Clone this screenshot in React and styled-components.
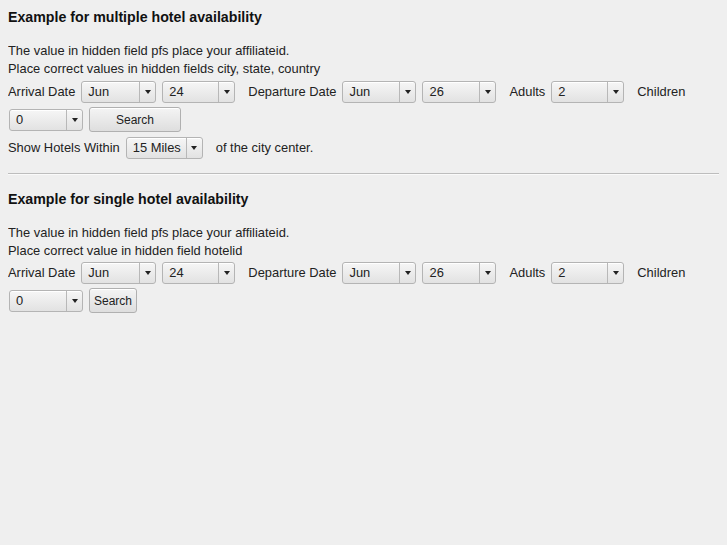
import styled, { createGlobalStyle } from "styled-components"

const GlobalStyle = createGlobalStyle`
body {
    margin: 8px;
    background: #efefef;
    font-family: "Liberation Sans", Arial, sans-serif;
    font-size: 12.9px;
    color: #222;
}
`

const Section = styled.div`
display: flex;
flex-direction: column;
`

const Title = styled.div`
font-weight: bold;
font-size: 14.2px;
line-height: 18px;
color: #111;
margin-bottom: ${(p) => p.gap}px;
`

const Line = styled.div`
line-height: 18px;
`

const Row = styled.div`
display: flex;
flex-wrap: wrap;
align-items: center;
row-gap: 4px;
margin-top: ${(p) => p.top || 0}px;
`

const Label = styled.span`
margin-left: ${(p) => (p.first ? 0 : 8)}px;
margin-right: 5px;
line-height: 22px;
white-space: nowrap;
`

const Select = styled.div`
display: flex;
width: ${(p) => p.width}px;
height: 22px;
margin: 0 5px 0 1px;
box-sizing: border-box;
border: 1px solid #b4b4b4;
border-radius: 3px;
background: linear-gradient(#f6f6f6, #e2e2e2);
box-shadow: inset 0 1px 0 #fff;
.value {
    flex: 1;
    padding-left: 6px;
    line-height: 20px;
}
.arrow {
    width: 15px;
    border-left: 1px solid #b8b8b8;
    display: flex;
    align-items: center;
    justify-content: center;
}
.arrow::after {
    content: "";
    border-left: 3px solid transparent;
    border-right: 3px solid transparent;
    border-top: 4px solid #222;
}
`

const Button = styled.button`
height: 25px;
width: ${(p) => (p.width ? p.width + "px" : "auto")};
padding: 0 4px;
margin: 0 5px 0 1px;
font-family: inherit;
font-size: 12px;
color: #222;
border: 1px solid #b0b0b0;
border-radius: 3px;
background: linear-gradient(#f4f4f4, #dedede);
box-shadow: inset 0 1px 0 #fff;
`

const Rule = styled.hr`
margin: 14px 0 15px 0;
border: none;
border-top: 1px solid #bdbdbd;
border-bottom: 1px solid #fafafa;
`

function Dropdown({ value, width = 74 }) {
    return (
        <Select width={width}>
            <span className="value">{value}</span>
            <span className="arrow" />
        </Select>
    )
}

function DateFields() {
    return (
        <>
            <Label first>Arrival Date</Label>
            <Dropdown value="Jun" width={75} />
            <Dropdown value="24" width={73} />
            <Label>Departure Date</Label>
            <Dropdown value="Jun" width={74} />
            <Dropdown value="26" width={74} />
            <Label>Adults</Label>
            <Dropdown value="2" width={73} />
            <Label>Children</Label>
        </>
    )
}

export default function App() {
    return (
        <>
            <GlobalStyle />
            <Section>
                <Title gap={16}>Example for multiple hotel availability</Title>
                <Line>The value in hidden field pfs place your affiliateid.</Line>
                <Line>Place correct values in hidden fields city, state, country</Line>
                <Row top={3}>
                    <DateFields />
                    <Dropdown value="0" width={74} />
                    <Button width={92}>Search</Button>
                </Row>
                <Row top={5}>
                    <Label first>Show Hotels Within</Label>
                    <Dropdown value="15 Miles" width={77} />
                    <Label>of the city center.</Label>
                </Row>
            </Section>
            <Rule />
            <Section>
                <Title gap={16}>Example for single hotel availability</Title>
                <Line>The value in hidden field pfs place your affiliateid.</Line>
                <Line>Place correct value in hidden field hotelid</Line>
                <Row top={2}>
                    <DateFields />
                    <Dropdown value="0" width={74} />
                    <Button>Search</Button>
                </Row>
            </Section>
        </>
    )
}
